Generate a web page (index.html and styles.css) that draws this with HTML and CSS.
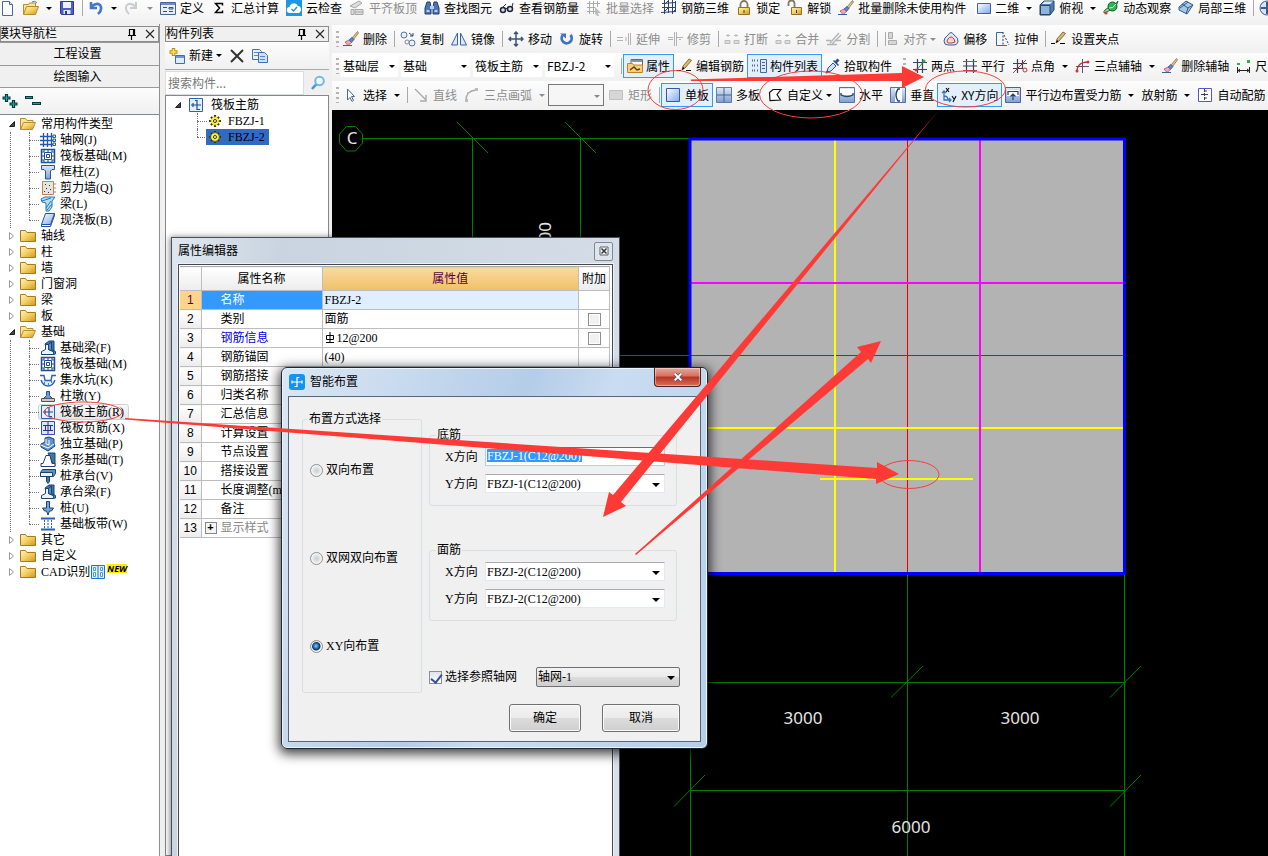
FILE: index.html
```html
<!DOCTYPE html>
<html lang="zh-CN">
<head>
<meta charset="utf-8">
<title>筏板主筋</title>
<link rel="stylesheet" href="styles.css">
</head>
<body>
<svg class="defs" aria-hidden="true">
<defs>
<linearGradient id="gold" x1="0" y1="0" x2="1" y2="1"><stop offset="0" stop-color="#fff3b8"/><stop offset=".5" stop-color="#f3cf62"/><stop offset="1" stop-color="#cf9420"/></linearGradient>
<linearGradient id="blue" x1="0" y1="0" x2="1" y2="1"><stop offset="0" stop-color="#fff"/><stop offset="1" stop-color="#7fa8ee"/></linearGradient>
<linearGradient id="steel" x1="0" y1="0" x2="0" y2="1"><stop offset="0" stop-color="#dfe9f8"/><stop offset="1" stop-color="#7f9fd0"/></linearGradient>
</defs>
<symbol id="i-doc" viewBox="0 0 16 16"><path d="M2.500 1.500h7l3 3v11h-10z" fill="#fff" stroke="#4c6a94"/><path d="M9.500 1.500v3h3" fill="#cfe0f5" stroke="#4c6a94"/></symbol>
<symbol id="i-open" viewBox="0 0 16 16"><path d="M.5 14V4.500h5l1-1.500h6v3" fill="#fbe49a" stroke="#b98c2c"/><path d="M.5 14.500l3-8h12l-3 8z" fill="url(#gold)" stroke="#b98c2c"/><path d="M9 2q3-2 5 1" fill="none" stroke="#4976b8"/></symbol>
<symbol id="i-fopen" viewBox="0 0 16 16"><path d="M.5 13.500v-11h5l1.500 2h6v3" fill="#fbe49a" stroke="#b98c2c"/><path d="M.5 13.500l3-7h12l-3 7z" fill="url(#gold)" stroke="#b98c2c"/></symbol>
<symbol id="i-save" viewBox="0 0 16 16"><path d="M1.500 1.500h13v13h-12l-1-1z" fill="#4f5fc4" stroke="#2e3a8c"/><path d="M4 2h8v6H4z" fill="#eef3ff"/><path d="M4.500 10h7v4h-7z" fill="#dfe5f5"/><path d="M6 11h2v3H6z" fill="#2e3a8c"/></symbol>
<symbol id="i-undo" viewBox="0 0 16 16"><path d="M3 2v6h6M3 7q5-5 9-2 3 4-2 9" fill="none" stroke="#4476cf" stroke-width="2.600"/></symbol>
<symbol id="i-redo" viewBox="0 0 16 16"><path d="M12 2v6H6M12 7Q7 2 3 5q-3 4 2 9" fill="none" stroke="#c9ccd2" stroke-width="2"/></symbol>
<symbol id="i-define" viewBox="0 0 16 16"><path d="M.5 2.500h15v12H.5z" fill="#e8effa" stroke="#4a6493"/><path d="M1 3h14v2H1z" fill="#6b8cc7"/><path d="M3 7.500h4M3 11.500h4M9 7.500h4v1.500H9zM9 11.500h4" fill="none" stroke="#35507f"/></symbol>
<symbol id="i-sigma" viewBox="0 0 16 16"><path d="M11.500 5.500V3.500h-7L8.500 8l-4 4.500h7v-2" fill="none" stroke="#000" stroke-width="1.500"/></symbol>
<symbol id="i-cloud" viewBox="0 0 16 16"><path d="M0 0h16v16H0z" fill="#1e96e6"/><path d="M4 13a3 3 0 0 1-.5-6A4.500 4.500 0 0 1 12 6a3.600 3.600 0 0 1 .5 7z" fill="#fff"/><path d="M5.500 9l2 2 3.500-4" fill="none" stroke="#1e96e6" stroke-width="1.300"/></symbol>
<symbol id="i-aligntop" viewBox="0 0 16 16"><path d="M1 6l9-5 3 2-7 5zM2 9.500h3v5H2zM6 9.500h8v5H6zM6 12h8" fill="#ddd" stroke="#a8a8a8"/></symbol>
<symbol id="i-binoc" viewBox="0 0 16 16"><path d="M3 2h3l1 5v7H1V8zM10 2h3l2 6v6H9V7z" fill="#4c74b4" stroke="#223f70"/><path d="M6 6h4v3H6zM2.500 10h3v2h-3zM10.500 10h3v2h-3z" fill="#b9cdf0"/></symbol>
<symbol id="i-glass" viewBox="0 0 16 16"><circle cx="4" cy="10" r="2.500" fill="#cfe0f4" stroke="#223" stroke-width="1.500"/><path d="M6 9l3-1M2 9l5-5M13 7l1-4" stroke="#334" fill="none"/><circle cx="11" cy="9" r="2.500" fill="#cfe0f4" stroke="#223" stroke-width="1.500"/></symbol>
<symbol id="i-batch" viewBox="0 0 16 16"><path d="M1 3.500h13M1 7.500h8M1 11.500h8M3.500 1v13M7.500 1v13M11.500 1v6" stroke="#ababab" fill="none"/><path d="M9 7l6 6h-3l1 3-2 0-1-2-1 1z" fill="#bbb"/></symbol>
<symbol id="i-rebar3d" viewBox="0 0 16 16"><path d="M3.500 0v14M7.500 0v13M11.500 0v14M14.500 1v11M1 3.500l14-1M1 7.500h14M0 12.500l15-1M3 5l4-4M11 13l4-4M3 12l4-4" stroke="#2c4470" fill="none"/></symbol>
<symbol id="i-lock" viewBox="0 0 16 16"><path d="M4.500 7V4.500a3 3 0 0 1 7 0V7" fill="none" stroke="#857a63" stroke-width="1.800"/><path d="M2.500 7.500h11v7h-11z" fill="url(#gold)" stroke="#97701c"/><path d="M7.500 10h1v3h-1z" fill="#503a10"/></symbol>
<symbol id="i-unlock" viewBox="0 0 16 16"><path d="M1.500 6V3.500a3 3 0 0 1 6 0V7" fill="none" stroke="#857a63" stroke-width="1.800"/><path d="M4.500 7.500h10v7h-10z" fill="url(#gold)" stroke="#97701c"/><path d="M9 10h1v3H9z" fill="#503a10"/></symbol>
<symbol id="i-erase" viewBox="0 0 16 16"><path d="M14.500.5L9 7l1.500 1.500L15.500 2z" fill="#e3c58a" stroke="#7c6230" stroke-width=".7"/><path d="M9 6.500L6 9l2.500 2.500L11 8.500z" fill="#5a86d8" stroke="#27427c" stroke-width=".7"/><path d="M6 9l-4 2 3 3.500 3.500-3z" fill="#f0a8b6" stroke="#8c4c67" stroke-width=".7"/><path d="M0 14.500h9" stroke="#37609e"/></symbol>
<symbol id="i-2d" viewBox="0 0 16 16"><path d="M2.500 3.500h13v10h-13z" fill="url(#blue)" stroke="#3c62b5"/></symbol>
<symbol id="i-cube" viewBox="0 0 16 16"><path d="M1 5l4-4h10v9l-4 5H1z" fill="#4c7db1" stroke="#24466e"/><path d="M1.500 5.500H11v9H1.500z" fill="#8fb4dc" stroke="#24466e"/><path d="M3 4l2.500-2.500H14L11 4z" fill="#d8ebfb"/></symbol>
<symbol id="i-orbit" viewBox="0 0 16 16"><path d="M1 13q-1-3 6-6t8-6q0 4-6 8t-8 4" fill="#8fd6a2" stroke="#167136"/><circle cx="9.500" cy="6.500" r="4.500" fill="#2eb356" stroke="#0c5f27"/><path d="M6 8q4 1 7-4" fill="none" stroke="#d5f4dc"/><circle cx="3" cy="13" r="1.500" fill="#d33"/></symbol>
<symbol id="i-part3d" viewBox="0 0 16 16"><path d="M1 7l7-6 7 4-6 9-8-4z" fill="#a9c7e6" stroke="#2c5a8c"/><path d="M4 4l6 4-2 6M10 8l5-3M2 8l8-6" fill="none" stroke="#2c5a8c"/></symbol>
<symbol id="i-globe" viewBox="0 0 16 16"><circle cx="8" cy="8" r="7" fill="#d6e4f5" stroke="#3c5c8c"/><path d="M2 8h12M8 2v12" stroke="#3c5c8c" stroke-width="2"/></symbol>
<symbol id="i-copy" viewBox="0 0 16 16"><circle cx="4" cy="4" r="3" fill="#e6eef8" stroke="#56759e"/><circle cx="12" cy="12" r="3" fill="#e6eef8" stroke="#56759e"/><circle cx="7" cy="11" r="2" fill="#fff" stroke="#889"/><path d="M9 2l4 3M13 2v3h-3" stroke="#2b4b88" fill="none"/></symbol>
<symbol id="i-mirror" viewBox="0 0 16 16"><path d="M6.500 2v12h-6zM9.500 2v12h6z" fill="#dce8fb" stroke="#3b62a8"/></symbol>
<symbol id="i-move" viewBox="0 0 16 16"><path d="M8 1v14M1 8h14M6 3l2-2 2 2M6 13l2 2 2-2M3 6L1 8l2 2M13 6l2 2-2 2" stroke="#3c5478" stroke-width="1.500" fill="none"/></symbol>
<symbol id="i-rotate" viewBox="0 0 16 16"><path d="M3.500 4.500a5 5 0 1 0 8-.5" stroke="#3d72c8" stroke-width="2.800" fill="none"/><path d="M1 2.500h6v5z" fill="#3d72c8"/></symbol>
<symbol id="i-extend" viewBox="0 0 16 16"><path d="M1 6.500h6M1 9.500h6M9 7h2M9 9h2M12.500 2v12M14.500 2v12" stroke="#b3b3b3"/></symbol>
<symbol id="i-trim" viewBox="0 0 16 16"><path d="M1 6.500h5M1 8.500h5M10 6.500h6M12 8.500h2M7.500 1v14M9.500 1v14" stroke="#b3b3b3"/></symbol>
<symbol id="i-break" viewBox="0 0 16 16"><path d="M2 4.500h4M10 4.500h4M4 3v3M12 3v3M1 9.500h5v3H1zM10 9.500h5v3h-5z" stroke="#bbb" fill="#ddd"/></symbol>
<symbol id="i-split" viewBox="0 0 16 16"><path d="M0 9.500h5M9 9.500h6M1 13.500h10M13 2L4 12M15 4l-9 9" stroke="#b3b3b3" stroke-width="1.300"/></symbol>
<symbol id="i-align" viewBox="0 0 16 16"><path d="M2.500 1v14M5.500 1.500h4v6h-4zM5.500 9.500h8v4h-8z" stroke="#aaa" fill="#d6d6d6"/></symbol>
<symbol id="i-offset" viewBox="0 0 16 16"><path d="M5 4q3-5 6 0 5 3 4 7-1 3-4 3H5q-4 0-4-4 0-3 4-6z" fill="#dce7f7" stroke="#3d5d96"/><path d="M5 8q3-4 6 0l1 3-3 1H5q-2-2 0-4z" fill="#fbd7d4" stroke="#cf3b33"/></symbol>
<symbol id="i-stretch" viewBox="0 0 16 16"><path d="M9 1.500H2.500v13H13" fill="none" stroke="#3b6a9a"/><path d="M9 1v14M10 4l5 10" fill="none" stroke="#223e6a" stroke-dasharray="2 1.500"/></symbol>
<symbol id="i-pencil" viewBox="0 0 16 16"><path d="M0 12.500h4M9 12.500h5" stroke="#000" stroke-width="1.200"/><path d="M5 12l1-4 6-7 2.500 1.500L8 10z" fill="#d5bd6c" stroke="#665022" stroke-width=".8"/><path d="M5 12l1-3 1.500 1.200z" fill="#000"/></symbol>
<symbol id="i-prop" viewBox="0 0 16 16"><path d="M4 1.500h11.500v9H4z" fill="#fff" stroke="#667"/><path d="M4 2h11v2H4z" fill="#8793a8"/><path d="M.5 14.500V5.500h5l1 1.500h9v7.500z" fill="#f7cf7d" stroke="#c58218"/><path d="M3 12l4-3 3 3 3-1" stroke="#5c4320" fill="none" stroke-width="1.500"/></symbol>
<symbol id="i-list" viewBox="0 0 16 16"><path d="M1 2.500h3M1 7.500h3M1 12.500h3M6 2.500h2M6 7.500h2M6 12.500h2" stroke="#46679d" stroke-width="2" stroke-dasharray="1 1"/><path d="M9.500 1.500h6v13h-6z" fill="#dbe8fb" stroke="#46679d"/><path d="M11 4.500h3M11 7.500h3M11 10.500h3" stroke="#46679d"/></symbol>
<symbol id="i-dropper" viewBox="0 0 16 16"><path d="M2 14l1-4 5-5 3 3-5 5z" fill="#cfe2f7" stroke="#2f5791"/><path d="M8 3l5 5 1-1-2-2 2.500-2.500-2-2L10 3 9 2z" fill="#28508c"/><path d="M1 15l2-2" stroke="#28508c" stroke-width="2"/></symbol>
<symbol id="i-hash" viewBox="0 0 16 16"><path d="M5.500 1v14M10.500 1v14M1 4.500h14M1 11.500h14" stroke="#39415f" stroke-width="1.200"/><path d="M4 13l8-10" stroke="#2e8f3e"/><circle cx="12" cy="3" r="1.500" fill="#2fb245"/><circle cx="4" cy="12" r="1.500" fill="#c33"/></symbol>
<symbol id="i-par" viewBox="0 0 16 16"><path d="M4.500 1v14M11.500 1v14" stroke="#39415f" stroke-width="1.200"/><path d="M1 3.500h14M1 12.500h14" stroke="#b9404a"/><path d="M1 8h14" stroke="#39415f"/></symbol>
<symbol id="i-ang" viewBox="0 0 16 16"><path d="M5.500 1v14M1 5.500h14M1 10.500h10M10.500 2v9" stroke="#39415f" stroke-width="1.200"/><path d="M1 15L14 2" stroke="#c33"/><circle cx="13" cy="12" r="2" fill="none" stroke="#c33"/></symbol>
<symbol id="i-3p" viewBox="0 0 16 16"><path d="M2 14q0-10 11-10" fill="none" stroke="#c33" stroke-width="1.300"/><path d="M7.500 1v14M1 8.500h13" stroke="#6b4a70"/><circle cx="13" cy="4" r="1.500" fill="#c33"/><circle cx="2" cy="13" r="1.500" fill="#c33"/></symbol>
<symbol id="i-dim" viewBox="0 0 16 16"><path d="M1.500 9v6M13.500 9v6M2 12.500h11M4 11l-2 1.500L4 14M11 11l2 1.500-2 1.500" fill="none" stroke="#222"/><path d="M1 5h3v2H1zM11 2h3v3h-3z" fill="#38ad4b"/></symbol>
<symbol id="i-pointer" viewBox="0 0 16 16"><path d="M4.500 2v11l2.500-2.500 2 4 1.500-1-2-4h3z" fill="#fff" stroke="#50658d"/></symbol>
<symbol id="i-line" viewBox="0 0 16 16"><path d="M2 2l11 11M13 8v6H7" stroke="#aaa" fill="none" stroke-width="1.400"/></symbol>
<symbol id="i-arc" viewBox="0 0 16 16"><path d="M2 13q0-9 10-10" stroke="#aaa" fill="none" stroke-width="1.300"/><path d="M1 12h3v3H1zM11 1h3v3h-3zM3 5h2v2H3z" fill="#bbb"/></symbol>
<symbol id="i-rect" viewBox="0 0 16 16"><path d="M1.500 3.500h13v9h-13z" fill="#d6d6d6" stroke="#c0c0c0"/></symbol>
<symbol id="i-single" viewBox="0 0 16 16"><path d="M1.500 1.500h13v13h-13z" fill="url(#blue)" stroke="#3459b4"/></symbol>
<symbol id="i-multi" viewBox="0 0 16 16"><path d="M.5.5h15v15H.5z" fill="url(#steel)" stroke="#5b7ba8"/><path d="M8 1v14M1 8h14" stroke="#44648f"/></symbol>
<symbol id="i-poly" viewBox="0 0 16 16"><path d="M3 13.500l-.5-8L6 2.500h8l-4 5 3.500 5.500z" fill="#fff" stroke="#111" stroke-width="1.200"/></symbol>
<symbol id="i-horiz" viewBox="0 0 16 16"><path d="M.5.5h15v15H.5z" fill="url(#steel)" stroke="#5373a5"/><path d="M1 2h14v4q-7 5-14 0z" fill="#fff"/><path d="M2 6v2q6 3 12 0V6" fill="none" stroke="#274472" stroke-width="1.300"/></symbol>
<symbol id="i-vert" viewBox="0 0 16 16"><path d="M.5.5h15v15H.5z" fill="url(#steel)" stroke="#5373a5"/><path d="M5 1h7v14H5z" fill="#fff"/><path d="M10 2H8Q4 8 8 14h2" fill="none" stroke="#274472" stroke-width="1.400"/></symbol>
<symbol id="i-xy" viewBox="0 0 16 16"><path d="M5 1l3 4M8 1L5 5M11 9l2 3M15 9l-3 6" stroke="#111" stroke-width="1.200"/><path d="M3 4v9h7M1 6l2-2 2 2M8 11l2 2-2 2M3 9q4 0 4 4" fill="none" stroke="#3973b8" stroke-width="1.300"/></symbol>
<symbol id="i-edge" viewBox="0 0 16 16"><path d="M.5.5h15v15H.5z" fill="url(#steel)" stroke="#4766a0"/><path d="M2 3h12v6H2z" fill="#fff"/><path d="M3 8V4.500h10V8M8 13V7M5.500 9.500L8 7l2.500 2.500" fill="none" stroke="#20406f" stroke-width="1.200"/></symbol>
<symbol id="i-auto" viewBox="0 0 16 16"><path d="M1.500 1.500h13v13h-13z" fill="#fff" stroke="#5558c9"/><path d="M7.500 2v12M4 7.500h8M7 4h3M7 11h3" fill="none" stroke="#333a80" stroke-dasharray="3 1"/></symbol>
<symbol id="i-folder" viewBox="0 0 16 16"><path d="M.5 13.500v-11h5l1.500 2h8.500v9z" fill="url(#gold)" stroke="#a77a1c"/></symbol>
<symbol id="i-grid" viewBox="0 0 16 16"><path d="M3.500 1v14M7.500 1v14M11.500 1v14M0 4.500h13M0 8.500h13M0 12.500h13" stroke="#2256ae" stroke-width="1.300"/><path d="M13 3h2.500v2.500H13zM13 7h2.500v2.500H13zM13 11h2.500v2.500H13z" fill="#fff" stroke="#2256ae"/></symbol>
<symbol id="i-raft" viewBox="0 0 16 16"><path d="M1.500 1.500h13v13h-13z" fill="#fff" stroke="#1d4e92" stroke-width="1.500"/><path d="M4.500 4.500h7v7h-7z" fill="#fff" stroke="#1d4e92"/><path d="M8 2v2M8 12v2M2 8h2M12 8h2M4 2v2M12 2v2M4 12v2M12 12v2M2 4h2M12 4h2M2 12h2M12 12h2M6.500 6.500h3v3h-3z" fill="none" stroke="#1d4e92"/></symbol>
<symbol id="i-col" viewBox="0 0 16 16"><path d="M1.500 1.500h13v4H12L10.500 7v8h-5V7L4 5.500H1.500z" fill="url(#steel)" stroke="#2555a4"/></symbol>
<symbol id="i-wall" viewBox="0 0 16 16"><path d="M2.500 1.500h11v13h-11z" fill="#e4e4e4" stroke="#cf7e4c"/><path d="M5 4h1v1H5zM9 5h1v1H9zM6 8h1v1H6zM10 9h1v1h-1zM4 11h1v1H4zM8 12h1v1H8z" fill="#333"/><path d="M14 4h2M14 8h2M14 12h2" stroke="#cf7e4c"/></symbol>
<symbol id="i-beam" viewBox="0 0 16 16"><path d="M1 3l4-2h10l-3 4v6l-3 4H6V7L2 6z" fill="#b6dcf8" stroke="#2577bf"/><path d="M2 5l9-3M6 12l5-7M7 14l5-6" stroke="#2577bf"/></symbol>
<symbol id="i-slab" viewBox="0 0 16 16"><path d="M5.500 1.500h9l-4 11h-9z" fill="url(#blue)" stroke="#214fa3"/><path d="M1.500 12.500v2h9l4-11v-2" fill="none" stroke="#214fa3"/></symbol>
<symbol id="i-fbeam" viewBox="0 0 16 16"><path d="M5 4l4-3h5v13H9z" fill="#3f74ad" stroke="#1b4270"/><path d="M1.500 14.500v-3l4-2v-5h3v5l5 2v3z" fill="#e9f2fc" stroke="#1b4270"/><path d="M8.500 4.500l3-2.500v7.500l4 2v2.500l-2 .5v-3l-5-2z" fill="#5a90c8" stroke="#1b4270"/></symbol>
<symbol id="i-pit" viewBox="0 0 16 16"><path d="M1 8q2 6 7 6t7-6l-4 .5H5z" fill="#dce9fa"/><path d="M0 3.500h4l1 5h6l1-5h4M1 8q2 6 7 6t7-6M4 11h1M8 12h1M11 10h1" fill="none" stroke="#2b62b0" stroke-width="1.400"/></symbol>
<symbol id="i-pier" viewBox="0 0 16 16"><path d="M6.500 3.500h3v4l3 3h-9l3-3z" fill="#6f9cd6" stroke="#29518b"/><path d="M1.500 10.500h13v3h-13z" fill="#c9c9c9" stroke="#555"/></symbol>
<symbol id="i-main" viewBox="0 0 16 16"><path d="M1.500 1.500h13v13h-13z" fill="#e4edfc" stroke="#2b62b8"/><path d="M3 8h10M9 3v10M9 12.500h3M5 6v4M9 3.500H7" fill="none" stroke="#1b4f97" stroke-width="1.200"/></symbol>
<symbol id="i-neg" viewBox="0 0 16 16"><path d="M1.500 1.500h13v13h-13z" fill="#dce5fb" stroke="#3a50b0"/><path d="M8 2v12M3 5.500h10M3 10.500h10M5.500 6v4M10.500 6v4" stroke="#23357f"/></symbol>
<symbol id="i-iso" viewBox="0 0 16 16"><path d="M1 8l4-2V2l4-1 5 2v5l1 2-7 5-7-4z" fill="#5f94cc" stroke="#1b4270"/><path d="M1 9l7 3 6-4M6 3v5l3 1V4" fill="none" stroke="#fff"/></symbol>
<symbol id="i-strip" viewBox="0 0 16 16"><path d="M8 1h7v13l-2-2-3-7z" fill="#3f74ad" stroke="#1b4270"/><path d="M1 14.500v-3h2l3-8h4l2 8h3v3z" fill="#fff" stroke="#1b4270"/></symbol>
<symbol id="i-cap" viewBox="0 0 16 16"><path d="M.5 4.500l2-3h13v4l-2 3H.5z" fill="#5a90c8" stroke="#1b4270"/><path d="M.5 4.500h12v4H.5z" fill="#e9f2fc" stroke="#1b4270"/><path d="M6.500 8.500h3v5l-1.500 2-1.500-2z" fill="#3f74ad" stroke="#1b4270"/></symbol>
<symbol id="i-pile" viewBox="0 0 16 16"><path d="M6.500 1.500h3V8h4l-2 3h-2l-1.500 4L6.500 11h-2l-2-3h4z" fill="#78a6d8" stroke="#1b4270"/></symbol>
<symbol id="i-band" viewBox="0 0 16 16"><path d="M1 2.500h14M1 13.500h14" stroke="#2461b5" stroke-width="2"/><path d="M4.500 4v9M8 4v9M11.500 4v9" stroke="#2461b5" stroke-dasharray="2 1"/></symbol>
<symbol id="i-cad" viewBox="0 0 16 16"><path d="M1.500 1.500h13v13h-13zM8 1v14" fill="#e1f0ff" stroke="#1c74c9"/><path d="M3.500 3.500h2v3h-2zM10.500 3.500h2v3h-2zM3.500 8.500h2v4h-2zM10.500 8.500h2v4h-2z" fill="#fff" stroke="#4e97dd"/></symbol>
<symbol id="i-gear" viewBox="0 0 16 16"><path d="M8 2v12M2 8h12M4 4l8 8M12 4l-8 8" stroke="#3a3400" stroke-width="2.200"/><circle cx="8" cy="8" r="3.800" fill="#ffee20"/><path d="M8 3.500v9M3.500 8h9M5 5l6 6M11 5l-6 6" stroke="#ffee20" stroke-width="1.200"/><circle cx="8" cy="8" r="1.500" fill="#fff" stroke="#333"/></symbol>
<symbol id="i-new" viewBox="0 0 16 16"><path d="M6.500 7.500h9v8h-9z" fill="#dcebff" stroke="#3e6cb0"/><path d="M7 8h8v2H7z" fill="#6c96d8"/><path d="M4.500 0v8M.5 4h8" stroke="#b98d14" stroke-width="3.400"/><path d="M4.500 1v6M1.500 4h6" stroke="#ffe45b" stroke-width="1.600"/></symbol>
<symbol id="i-x" viewBox="0 0 16 16"><path d="M2 2l12 12M14 2L2 14" stroke="#333" stroke-width="2"/></symbol>
<symbol id="i-pages" viewBox="0 0 16 16"><path d="M.5 1.500h7l2 2v8h-9z" fill="#e7f0ff" stroke="#3e6fc0"/><path d="M6.500 4.500h6l3 3v7h-9z" fill="#cfe0fb" stroke="#3e6fc0"/><path d="M2 4.500h4M2 7.500h4M8 8.500h5M8 11.500h5" stroke="#5a86cf"/></symbol>
<symbol id="i-search" viewBox="0 0 16 16"><circle cx="9.500" cy="6" r="4.300" fill="#eef8ff" stroke="#74b7e8" stroke-width="2"/><path d="M6 9.500L2 14" stroke="#4a94cf" stroke-width="2.600"/></symbol>
<symbol id="i-pin" viewBox="0 0 16 16"><path d="M5.500 9V3.500h5V9M9.500 4v5M4 9.500h8M7.500 10v4" fill="none" stroke="#000" stroke-width="1.200"/></symbol>
<symbol id="i-close" viewBox="0 0 16 16"><path d="M4 4l8 8M12 4l-8 8" stroke="#222" stroke-width="1.100"/></symbol>
<symbol id="i-minix" viewBox="0 0 16 16"><path d="M4 4h8v8H4z" fill="#fff" stroke="#56606c"/><path d="M5.500 5.500l5 5M10.500 5.500l-5 5" stroke="#333" stroke-width="1.500"/></symbol>
<symbol id="i-plus" viewBox="0 0 16 16"><path d="M4.500 1v8M.5 5h8M11.500 7v8M7.500 11h8" stroke="#013c3a" stroke-width="3.200"/><path d="M4.500 2v6M1.500 5h6M11.500 8v6M8.500 11h6" stroke="#16a39b"/></symbol>
<symbol id="i-minus" viewBox="0 0 16 16"><path d="M0 4.500h8M7 10.500h9" stroke="#013c3a" stroke-width="3"/><path d="M1 4.500h6M8 10.500h7" stroke="#16a39b"/></symbol>
<symbol id="i-opened" viewBox="0 0 8 8"><path d="M6.500 1.500v5h-5z" fill="#444" stroke="#222"/></symbol>
<symbol id="i-closed" viewBox="0 0 8 8"><path d="M1.500.5v7l4-3.500z" fill="#fff" stroke="#999"/></symbol>
</svg>

<div class="app">
<header class="bar bar-top">
<button class="tb" aria-label="新建工程"><svg><use href="#i-doc"/></svg></button>
<button class="tb" aria-label="打开"><svg><use href="#i-open"/></svg><i class="dd"></i></button>
<button class="tb" aria-label="保存"><svg><use href="#i-save"/></svg></button>
<i class="sep"></i>
<button class="tb" aria-label="撤销"><svg><use href="#i-undo"/></svg><i class="dd"></i></button>
<button class="tb off" aria-label="恢复"><svg><use href="#i-redo"/></svg><i class="dd"></i></button>
<button class="tb"><svg><use href="#i-define"/></svg>定义</button>
<button class="tb"><svg><use href="#i-sigma"/></svg>汇总计算</button>
<button class="tb"><svg><use href="#i-cloud"/></svg>云检查</button>
<button class="tb off"><svg><use href="#i-aligntop"/></svg>平齐板顶</button>
<button class="tb"><svg><use href="#i-binoc"/></svg>查找图元</button>
<button class="tb"><svg><use href="#i-glass"/></svg>查看钢筋量</button>
<button class="tb off"><svg><use href="#i-batch"/></svg>批量选择</button>
<button class="tb"><svg><use href="#i-rebar3d"/></svg>钢筋三维</button>
<button class="tb"><svg><use href="#i-lock"/></svg>锁定</button>
<button class="tb"><svg><use href="#i-unlock"/></svg>解锁</button>
<button class="tb"><svg><use href="#i-erase"/></svg>批量删除未使用构件</button>
<button class="tb view"><svg><use href="#i-2d"/></svg>二维<i class="dd"></i></button>
<button class="tb"><svg><use href="#i-cube"/></svg>俯视<i class="dd"></i></button>
<button class="tb"><svg><use href="#i-orbit"/></svg>动态观察</button>
<button class="tb"><svg><use href="#i-part3d"/></svg>局部三维</button>
<i class="sep"></i>
<button class="tb" aria-label="全屏"><svg><use href="#i-globe"/></svg></button>
</header>

<div class="body">
<aside class="nav">
<div class="panel-head nav-head"><span class="cut">模块导航栏</span><svg><use href="#i-pin"/></svg><svg><use href="#i-close"/></svg></div>
<button class="nav-btn">工程设置</button>
<button class="nav-btn">绘图输入</button>
<div class="nav-tools"><button class="tb" aria-label="全部展开"><svg><use href="#i-plus"/></svg></button><button class="tb" aria-label="全部折叠"><svg><use href="#i-minus"/></svg></button></div>
<ul class="tree nav-tree">
<li><div class="row"><svg class="tog"><use href="#i-opened"/></svg><svg><use href="#i-fopen"/></svg>常用构件类型</div>
<ul class="sub">
<li><svg><use href="#i-grid"/></svg>轴网(J)</li>
<li><svg><use href="#i-raft"/></svg>筏板基础(M)</li>
<li><svg><use href="#i-col"/></svg>框柱(Z)</li>
<li><svg><use href="#i-wall"/></svg>剪力墙(Q)</li>
<li><svg><use href="#i-beam"/></svg>梁(L)</li>
<li><svg><use href="#i-slab"/></svg>现浇板(B)</li>
</ul></li>
<li><div class="row"><svg class="tog"><use href="#i-closed"/></svg><svg><use href="#i-folder"/></svg>轴线</div></li>
<li><div class="row"><svg class="tog"><use href="#i-closed"/></svg><svg><use href="#i-folder"/></svg>柱</div></li>
<li><div class="row"><svg class="tog"><use href="#i-closed"/></svg><svg><use href="#i-folder"/></svg>墙</div></li>
<li><div class="row"><svg class="tog"><use href="#i-closed"/></svg><svg><use href="#i-folder"/></svg>门窗洞</div></li>
<li><div class="row"><svg class="tog"><use href="#i-closed"/></svg><svg><use href="#i-folder"/></svg>梁</div></li>
<li><div class="row"><svg class="tog"><use href="#i-closed"/></svg><svg><use href="#i-folder"/></svg>板</div></li>
<li><div class="row"><svg class="tog"><use href="#i-opened"/></svg><svg><use href="#i-fopen"/></svg>基础</div>
<ul class="sub">
<li><svg><use href="#i-fbeam"/></svg>基础梁(F)</li>
<li><svg><use href="#i-raft"/></svg>筏板基础(M)</li>
<li><svg><use href="#i-pit"/></svg>集水坑(K)</li>
<li><svg><use href="#i-pier"/></svg>柱墩(Y)</li>
<li><span class="current"><svg><use href="#i-main"/></svg>筏板主筋(R)</span></li>
<li><svg><use href="#i-neg"/></svg>筏板负筋(X)</li>
<li><svg><use href="#i-iso"/></svg>独立基础(P)</li>
<li><svg><use href="#i-strip"/></svg>条形基础(T)</li>
<li><svg><use href="#i-cap"/></svg>桩承台(V)</li>
<li><svg><use href="#i-fbeam"/></svg>承台梁(F)</li>
<li><svg><use href="#i-pile"/></svg>桩(U)</li>
<li><svg><use href="#i-band"/></svg>基础板带(W)</li>
</ul></li>
<li><div class="row"><svg class="tog"><use href="#i-closed"/></svg><svg><use href="#i-folder"/></svg>其它</div></li>
<li><div class="row"><svg class="tog"><use href="#i-closed"/></svg><svg><use href="#i-folder"/></svg>自定义</div></li>
<li><div class="row"><svg class="tog"><use href="#i-closed"/></svg><svg><use href="#i-folder"/></svg>CAD识别<svg class="cad"><use href="#i-cad"/></svg><b class="new">NEW</b></div></li>
</ul>
</aside>

<aside class="parts">
<div class="panel-head"><span>构件列表</span><svg><use href="#i-pin"/></svg><svg><use href="#i-close"/></svg></div>
<div class="parts-tools">
<button class="tb"><svg><use href="#i-new"/></svg>新建<i class="dd tight"></i></button>
<button class="tb" aria-label="删除构件"><svg><use href="#i-x"/></svg></button>
<button class="tb" aria-label="复制构件"><svg><use href="#i-pages"/></svg></button>
</div>
<div class="search"><input type="text" placeholder="搜索构件..." aria-label="搜索构件"><button class="tb" aria-label="搜索"><svg><use href="#i-search"/></svg></button></div>
<ul class="tree parts-tree">
<li><div class="row"><svg class="tog"><use href="#i-opened"/></svg><svg><use href="#i-main"/></svg>筏板主筋</div>
<ul class="sub">
<li><span class="part"><svg><use href="#i-gear"/></svg>FBZJ-1</span></li>
<li><span class="part picked"><svg><use href="#i-gear"/></svg>FBZJ-2</span></li>
</ul></li>
</ul>
</aside>

<main class="work">
<div class="bars">
<div class="bar">
<i class="grip"></i>
<button class="tb"><svg><use href="#i-erase"/></svg>删除</button><i class="sep"></i>
<button class="tb"><svg><use href="#i-copy"/></svg>复制</button>
<button class="tb"><svg><use href="#i-mirror"/></svg>镜像</button><i class="sep"></i>
<button class="tb"><svg><use href="#i-move"/></svg>移动</button>
<button class="tb"><svg><use href="#i-rotate"/></svg>旋转</button><i class="sep"></i>
<button class="tb off"><svg><use href="#i-extend"/></svg>延伸</button>
<button class="tb off"><svg><use href="#i-trim"/></svg>修剪</button><i class="sep"></i>
<button class="tb off"><svg><use href="#i-break"/></svg>打断</button>
<button class="tb off"><svg><use href="#i-break"/></svg>合并</button>
<button class="tb off"><svg><use href="#i-split"/></svg>分割</button><i class="sep"></i>
<button class="tb off"><svg><use href="#i-align"/></svg>对齐<i class="dd tight"></i></button>
<button class="tb"><svg><use href="#i-offset"/></svg>偏移</button>
<button class="tb"><svg><use href="#i-stretch"/></svg>拉伸</button><i class="sep"></i>
<button class="tb"><svg><use href="#i-pencil"/></svg>设置夹点</button>
</div>
<div class="bar snug">
<i class="grip"></i>
<div class="combos">
<label class="combo short"><select aria-label="楼层"><option>基础层</option></select></label>
<label class="combo"><select aria-label="构件大类"><option>基础</option></select></label>
<label class="combo"><select aria-label="构件类型"><option>筏板主筋</option></select></label>
<label class="combo"><select aria-label="构件"><option>FBZJ-2</option></select></label>
</div>
<i class="sep"></i>
<button class="tb on"><svg><use href="#i-prop"/></svg>属性</button>
<button class="tb"><svg><use href="#i-pencil"/></svg>编辑钢筋</button>
<button class="tb on"><svg><use href="#i-list"/></svg>构件列表</button>
<button class="tb"><svg><use href="#i-dropper"/></svg>拾取构件</button>
<i class="grip"></i>
<button class="tb"><svg><use href="#i-hash"/></svg>两点</button>
<button class="tb"><svg><use href="#i-par"/></svg>平行</button>
<button class="tb"><svg><use href="#i-ang"/></svg>点角<i class="dd wide"></i></button>
<button class="tb"><svg><use href="#i-3p"/></svg>三点辅轴<i class="dd wide"></i></button>
<button class="tb"><svg><use href="#i-erase"/></svg>删除辅轴</button>
<button class="tb"><svg><use href="#i-dim"/></svg>尺</button>
</div>
<div class="bar">
<i class="grip"></i>
<button class="tb"><svg><use href="#i-pointer"/></svg>选择<i class="dd"></i></button><i class="sep"></i>
<button class="tb off"><svg><use href="#i-line"/></svg>直线</button>
<button class="tb off"><svg><use href="#i-arc"/></svg>三点画弧<i class="dd"></i></button>
<label class="combo boxed off"><select aria-label="弧选项"><option></option></select></label>
<button class="tb off"><svg><use href="#i-rect"/></svg>矩形</button><i class="sep"></i>
<button class="tb on"><svg><use href="#i-single"/></svg>单板</button>
<button class="tb"><svg><use href="#i-multi"/></svg>多板</button>
<button class="tb"><svg><use href="#i-poly"/></svg>自定义<i class="dd tight"></i></button>
<button class="tb"><svg><use href="#i-horiz"/></svg>水平</button>
<button class="tb"><svg><use href="#i-vert"/></svg>垂直</button>
<button class="tb on"><svg><use href="#i-xy"/></svg>XY方向</button>
<button class="tb"><svg><use href="#i-edge"/></svg>平行边布置受力筋<i class="dd"></i></button>
<button class="tb">放射筋<i class="dd"></i></button>
<button class="tb"><svg><use href="#i-auto"/></svg>自动配筋</button>
</div>
</div>
<div class="canvas">
<svg class="drawing" viewBox="332 110 936 746" preserveAspectRatio="xMinYMin slice">
<g fill="none" stroke="#008000">
<path d="M346.500 126.500h9l7 7.500v9l-7 8h-9l-7-8v-9z"/>
<path d="M363 138.500h327M472.500 138v120M580.500 138v120M457 122l31 31M565 122l31 31M600 355.500h90M690.500 574v282M907.500 574v282M1124.500 574v282M690 682.500h434M690 790.500h434"/>
<path d="M891 697.500l32-31.500M1110 697.500l31-31.500M1110 806.500l31-31.500M674 806.500l31-31.500"/>
</g>
<path d="M690 139h434.500v434.500H690z" fill="#b3b3b3"/>
<path d="M691 355.500h432M907.500 140v432" stroke="#e60000"/>
<path d="M835 140v432M691 428h432M820 479h153" stroke="#ff0" stroke-width="2"/>
<path d="M980 140v432M691 283h432" stroke="#f0f" stroke-width="2"/>
<path d="M690 139h434.500v434.500H690z" fill="none" stroke="#00f" stroke-width="3"/>
<g class="dims"><text x="352" y="144">C</text><text x="803" y="724">3000</text><text x="1020" y="724">3000</text><text x="911" y="833">6000</text><text transform="translate(551 261) rotate(-90)">3000</text></g>
</svg>
</div>
</main>
</div>
</div>

<section class="win props" aria-label="属性编辑器">
<div class="props-title"><span>属性编辑器</span><button class="mini" aria-label="关闭"><svg><use href="#i-minix"/></svg></button></div>
<div class="props-body">
<table>
<colgroup><col class="c-num"><col class="c-name"><col><col class="c-add"></colgroup>
<thead><tr><th></th><th>属性名称</th><th class="hot">属性值</th><th>附加</th></tr></thead>
<tbody>
<tr class="cur"><th>1</th><td>名称</td><td>FBZJ-2</td><td></td></tr>
<tr><th>2</th><td>类别</td><td>面筋</td><td><input type="checkbox" aria-label="附加类别"></td></tr>
<tr><th>3</th><td class="link">钢筋信息</td><td><svg class="phi" viewBox="0 0 10 12"><path d="M5 0v11M1 10.500h8M1.500 3.500h7v4h-7z" fill="none" stroke="#000"/></svg>12@200</td><td><input type="checkbox" aria-label="附加钢筋信息"></td></tr>
<tr><th>4</th><td>钢筋锚固</td><td>(40)</td><td></td></tr>
<tr><th>5</th><td>钢筋搭接</td><td></td><td></td></tr>
<tr><th>6</th><td>归类名称</td><td></td><td></td></tr>
<tr><th>7</th><td>汇总信息</td><td></td><td></td></tr>
<tr><th>8</th><td>计算设置</td><td></td><td></td></tr>
<tr><th>9</th><td>节点设置</td><td></td><td></td></tr>
<tr><th>10</th><td>搭接设置</td><td></td><td></td></tr>
<tr><th>11</th><td>长度调整(mm)</td><td></td><td></td></tr>
<tr><th>12</th><td>备注</td><td></td><td></td></tr>
<tr><th>13</th><td class="group"><button class="expand" aria-label="展开">+</button>显示样式</td><td></td><td></td></tr>
</tbody>
</table>
</div>
</section>

<section class="win dialog" role="dialog" aria-label="智能布置">
<div class="dialog-title"><svg class="logo" viewBox="0 0 16 16"><rect width="16" height="16" rx="3" fill="#1494ee"/><path d="M3 8h10M8 3v10M3 6.500v3M13 6.500v3M7.500 3.500h3M8 12.500H5.500" fill="none" stroke="#fff" stroke-width="1.200"/></svg><span>智能布置</span><button class="close" aria-label="关闭"><svg viewBox="0 0 14 12"><path d="M3 2l8 8M11 2l-8 8" stroke="#555c70" stroke-width="4.200"/><path d="M3 2l8 8M11 2l-8 8" stroke="#fff" stroke-width="2.400"/></svg></button></div>
<form class="client">
<fieldset class="ways"><legend>布置方式选择</legend>
<label><input type="radio" name="way">双向布置</label>
<label><input type="radio" name="way">双网双向布置</label>
<label><input type="radio" name="way" checked>XY向布置</label>
</fieldset>
<div class="right">
<fieldset class="bars-set"><legend>底筋</legend>
<label><span>X方向</span><span class="pick focus"><input type="text" value="FBZJ-1(C12@200)" size="15" readonly></span></label>
<label><span>Y方向</span><span class="pick arrow"><select><option>FBZJ-1(C12@200)</option></select></span></label>
</fieldset>
<fieldset class="bars-set"><legend>面筋</legend>
<label><span>X方向</span><span class="pick arrow"><select><option>FBZJ-2(C12@200)</option></select></span></label>
<label><span>Y方向</span><span class="pick arrow"><select><option>FBZJ-2(C12@200)</option></select></span></label>
</fieldset>
<div class="axis"><label><input type="checkbox" checked>选择参照轴网</label><span class="pick arrow flat"><select aria-label="轴网"><option>轴网-1</option></select></span></div>
<div class="actions"><button type="button" class="ok">确定</button><button type="button" class="cancel">取消</button></div>
</div>
</form>
</section>

<svg class="marks" viewBox="0 0 1268 856" aria-hidden="true">
<g fill="none" stroke="#f5403b"><ellipse cx="675.500" cy="90" rx="27.500" ry="19.500"/><ellipse cx="811" cy="94.500" rx="51.500" ry="23.500"/><ellipse cx="965.500" cy="89" rx="40" ry="18"/><ellipse cx="909" cy="474.500" rx="30" ry="14"/><ellipse cx="83" cy="412" rx="39" ry="10"/></g>
<g fill="#fd3a36">
<path d="M691 79.500v1.500l211 0v7l22-11-22-11v7z"/>
<path d="M938 111L613 495l-4-3-6 25 23-11-5-4z"/>
<path d="M635 554l1 1 232-196 3 4 10-22-24 6 4 5z"/>
<path d="M125 418v1.500l751 59.500v5l23-10-22-12v6z"/>
</g>
</svg>
</body>
</html>
```

FILE: styles.css
```css
* { box-sizing: border-box; }
body { margin: 0; height: 100vh; overflow: hidden; position: relative; background: #f0f0f0; color: #000; font: 12px/16px "Noto Sans", "Noto Sans CJK SC", sans-serif; }
button, input, select { font: inherit; color: inherit; margin: 0; padding: 0; }
ul { list-style: none; margin: 0; padding: 0; }
.defs { position: absolute; width: 0; height: 0; }
.app { height: 100%; display: flex; flex-direction: column; }
.body { flex: 1; min-height: 0; display: flex; }

/* toolbars */
.bar { display: flex; align-items: center; gap: 7px; height: 28px; padding-left: 4px; overflow: hidden; white-space: nowrap; background: linear-gradient(#fdfdfd, #f0f0f0); font-family: "Noto Sans CJK SC", sans-serif; }
.bar-top { height: 24px; flex: none; padding: 0 0 8px; }
.tb { display: flex; align-items: center; gap: 4px; flex: none; border: 0; background: none; white-space: nowrap; }
.tb svg { width: 16px; height: 16px; flex: none; }
.snug { padding-bottom: 2px; }
.snug .tb { gap: 3px; }
.tb.off { color: #8d8d8d; }
.tb.on { height: 24px; margin: 0 -4px; padding: 0 3px; border: 1px solid #3399ff; background: #e3effc; }
.tb.view { margin-left: 2px; background: #fff; }
.dd { flex: none; width: 6px; height: 3px; margin-left: 3px; border: 3px solid transparent; border-top-color: currentColor; border-bottom: 0; }
.dd.tight { margin-left: -1px; }
.dd.wide { margin-left: 4px; }
.sep { flex: none; width: 1px; height: 16px; margin-right: -2px; background: #a9a9a9; }
.grip { flex: none; width: 3px; height: 16px; margin-right: -3px; background: repeating-linear-gradient(#b4b4b4 0 2px, transparent 2px 5px); }
.tb + .grip { margin-left: 4px; margin-right: -1px; }
.combos { display: flex; gap: 3px; margin-left: -2px; }
.combo { position: relative; display: flex; width: 69px; height: 22px; background: #fff; }
.combo.short { width: 57px; }
.combo select { appearance: none; width: 100%; border: 0; background: none; padding-left: 2px; }
.combo::after { content: ""; position: absolute; right: 3px; top: 10px; border: 3px solid transparent; border-top-color: #000; border-bottom: 0; pointer-events: none; }
.combo.boxed { width: 56px; flex: none; margin: 0 -3px 0 -4px; border: 1px solid #777; background: #f6f6f6; }
.combo.off::after { border-top-color: #888; }

/* navigation */
.nav { width: 160px; flex: none; display: flex; flex-direction: column; padding-top: 2px; border-right: 1px solid #8c8f94; }
.panel-head { display: flex; align-items: center; height: 16px; flex: none; border: 1px solid #8c8c8c; overflow: hidden; }
.panel-head span { flex: 1; white-space: nowrap; }
.panel-head svg { width: 16px; height: 16px; margin-left: 2px; }
.cut { text-indent: -4px; }
.nav-btn { height: 22px; flex: none; border: 0; border-bottom: 1px solid #999; background: #f0f0f0; padding-right: 4px; }
.nav-head + .nav-btn { border-top: 1px solid #999; height: 24px; }
.nav-tools { display: flex; gap: 7px; height: 26px; padding-left: 2px; background: linear-gradient(#fdfdfd, #f0f0f0); }
.tree { font-family: "Liberation Serif", "Noto Sans CJK SC", serif; background: #fff; border-top: 1px solid #828790; overflow: hidden; flex: 1; }
.tree svg { width: 16px; height: 16px; flex: none; }
.tree .tog { width: 8px; height: 8px; }
.row { display: flex; align-items: center; gap: 5px; height: 16px; padding-left: 8px; white-space: nowrap; }
.row .tog { margin-right: -1px; }
.row .cad { margin-left: -5px; }
.nav-tree { padding-top: 1px; }
.sub { position: relative; margin-left: 29px; }
.sub::before { content: ""; position: absolute; left: -19px; top: 0; bottom: 0; border-left: 1px dotted #777; }
.sub li { position: relative; display: flex; align-items: center; gap: 4px; height: 16px; padding-left: 11px; white-space: nowrap; }
.sub li::before { content: ""; position: absolute; left: 0; top: 8px; width: 10px; border-top: 1px dotted #777; }
.sub li::after { content: ""; position: absolute; left: 0; top: 0; height: 16px; border-left: 1px dotted #777; }
.sub li:last-child::after { height: 8px; }
.current { display: flex; align-items: center; gap: 4px; height: 16px; margin-left: -2px; padding: 0 4px 0 1px; border: 1px solid #d2d2d2; border-radius: 3px; background: linear-gradient(#fafafa, #e5e5e5); }
.new { align-self: flex-start; margin-left: -4px; background: #ffed00; font: bold italic 9px/9px "Open Sans", sans-serif; }

/* component list */
.parts { width: 164px; margin: 0 3px 0 5px; flex: none; display: flex; flex-direction: column; padding-top: 2px; }
.parts-tools { display: flex; align-items: center; gap: 7px; height: 27px; padding: 0 4px; background: linear-gradient(#fdfdfd, #f0f0f0); }
.search { display: flex; align-items: center; gap: 6px; height: 26px; border-top: 1px solid #aaa; }
.search input { width: 139px; height: 24px; border: 1px solid #dcdcdc; padding-left: 2px; background: #fff; font-family: "Noto Sans CJK SC", sans-serif; }
.search input::placeholder { color: #777; }
.parts-tree { border: 1px solid #828790; padding-top: 1px; }
.parts-tree .row { gap: 7px; }
.parts-tree .sub { margin-left: 31px; }
.parts-tree .sub::before { display: none; }
.part { display: flex; align-items: center; gap: 5px; height: 16px; padding: 0 4px 0 1px; margin-left: -2px; }
.picked { background: #316ac5; }

/* drawing area */
.work { flex: 1; min-width: 0; display: flex; flex-direction: column; }
.bars { padding: 1px 0; }
.canvas { flex: 1; min-height: 0; background: #000; }
.drawing { display: block; width: 100%; height: 100%; }
.dims { fill: #e4e4e4; font: 17px "Noto Sans", sans-serif; text-anchor: middle; }
.dims text:last-child { text-anchor: start; }

/* floating windows */
.win { position: absolute; display: flex; flex-direction: column; }
.win, .win table { font-family: "Liberation Serif", "Noto Sans CJK SC", serif; }
.props { left: 171px; top: 237px; width: 449px; bottom: -8px; padding: 0 6px; border: 1px solid #4b5058; background: linear-gradient(100deg, #dfe6ee, #c9d4e0 20%, #d8e0e9); box-shadow: -1px 0 6px rgba(0, 0, 0, .5); }
.props-title { display: flex; align-items: center; justify-content: space-between; height: 26px; }
.mini { width: 19px; height: 19px; border: 1px solid #7f8893; border-radius: 2px; background: #dfe5ec; display: flex; align-items: center; justify-content: center; }
.mini svg { width: 16px; height: 16px; }
.props-body { flex: 1; background: #fff; border: 1px solid #444a52; padding: 1px; outline: 1px solid #eef2f6; }
.props table { width: 430px; border-collapse: collapse; table-layout: fixed; border-top: 1px solid #aaa; }
.c-num { width: 21px; }
.c-name { width: 121px; }
.c-add { width: 31px; }
.props th, .props td { height: 19px; padding: 0; border: 1px solid #bdbdbd; border-top: 0; border-left: 0; font-weight: normal; line-height: 18px; white-space: nowrap; overflow: hidden; }
.props th { background: linear-gradient(#fff, #ececec); text-align: center; font-family: "Liberation Sans", "Noto Sans CJK SC", sans-serif; }
.props thead th { height: 24px; }
.props th.hot { background: linear-gradient(#fadaa0, #f0c068); color: #600040; }
.props tbody td:nth-child(2) { padding-left: 19px; }
.props tbody td:nth-child(3) { padding-left: 2px; }
.props td:last-child { text-align: center; }
.props td input { appearance: none; width: 13px; height: 13px; border: 1px solid #8e8f8f; background: #f1f1f1; box-shadow: inset 0 0 0 1px #fff; vertical-align: middle; margin-bottom: 2px; }
.props .cur th { background: #fdd48a; color: #600040; }
.props .cur td:nth-child(2) { background: #3399ff; color: #fff; }
.props .cur td:nth-child(3) { background: #e0efff; }
.link { color: #0000e8; }
.props tbody td.group { padding-left: 3px; color: #888; }
.expand { width: 12px; height: 12px; margin-right: 4px; border: 1px solid #888; background: #f4f4f4; color: #000; font: bold 11px/9px "Liberation Sans", sans-serif; vertical-align: 1px; }
.phi { width: 10px; height: 12px; margin-right: 2px; vertical-align: -2px; }

.dialog { left: 281px; top: 367px; width: 427px; padding: 0 6px 6px; border: 1px solid #20262e; border-radius: 6px; background: linear-gradient(110deg, #dbe7f3, #b4cde8 45%, #cadcf0 60%, #b3d0ea); box-shadow: inset 0 0 0 1px #eaf4fd, 0 3px 12px 2px rgba(0, 0, 0, .75); }
.dialog-title { display: flex; align-items: center; gap: 5px; height: 28px; padding-left: 1px; }
.logo { width: 16px; height: 16px; }
.dialog-title span { flex: 1; }
.close { align-self: flex-start; width: 47px; height: 19px; border: 1px solid #4b1f1c; border-top: 0; border-radius: 0 0 4px 4px; background: linear-gradient(#e4a79a, #d4705f 45%, #b83222 50%, #d4715c); box-shadow: inset 0 0 0 1px rgba(255, 255, 255, .4); display: flex; align-items: center; justify-content: center; }
.close svg { width: 12px; height: 10px; }
.client { display: flex; gap: 7px; padding: 14px 20px 9px 13px; border: 1px solid #56677c; background: #f0f0f0; }
fieldset { margin: 0; min-width: 0; border: 1px solid #d5dfe5; border-radius: 3px; }
legend { padding: 0 1px; line-height: 16px; height: 16px; }
.ways { width: 120px; flex: none; display: flex; flex-direction: column; gap: 72px; padding: 35px 0 0 7px; height: 282px; }
.ways legend { margin-left: -2px; }
.ways label { display: flex; align-items: center; gap: 3px; height: 16px; white-space: nowrap; }
.ways input { appearance: none; width: 13px; height: 13px; border: 1px solid #8e8f8f; border-radius: 50%; background: radial-gradient(#c9cdd2, #eee 60%); box-shadow: inset 0 0 0 1px #f6f6f6; }
.ways input:checked { background: radial-gradient(circle at 5px 5px, #7fd3f7 0, #145a96 3px, #0c2f57 4px, #e8e8e8 5px); }
.right { flex: 1; min-width: 0; padding-top: 16px; }
.bars-set { width: 248px; display: flex; flex-direction: column; gap: 8px; padding: 4px 11px 12px 15px; }
.bars-set legend { margin-left: -9px; }
.bars-set + .bars-set { margin-top: 36px; }
.bars-set label { display: flex; align-items: center; justify-content: space-between; }
.pick { position: relative; display: flex; width: 180px; height: 20px; border: 1px solid #e3e9ef; border-top-color: #abadb3; background: #fff; }
.bars-set .pick { height: 19px; }
.pick select, .pick input { appearance: none; border: 0; background: none; outline: 0; }
.pick select { width: 100%; padding-left: 1px; }
.pick.arrow::after { content: ""; position: absolute; right: 4px; top: 8px; border: 4px solid transparent; border-top-color: #000; border-bottom: 0; pointer-events: none; }
.pick.focus { border-color: #b5cfe7; border-top-color: #3d7bad; }
.pick.focus input { width: 95px; height: 13px; margin: 1px; background: #3399ff; color: #fff; }
.axis { display: flex; align-items: center; justify-content: space-between; margin-top: 46px; }
.axis label { display: flex; align-items: center; gap: 3px; white-space: nowrap; }
.axis input { width: 13px; height: 13px; appearance: none; border: 1px solid #8e8f8f; background: linear-gradient(#dfe4ea, #fff); position: relative; }
.axis input::after { content: ""; position: absolute; left: 3px; top: 0; width: 5px; height: 9px; border: solid #3a4f9c; border-width: 0 2px 2px 0; transform: rotate(38deg); }
.pick.flat { width: 144px; border: 1px solid #707070; border-radius: 2px; background: linear-gradient(#f3f3f3, #ebebeb 50%, #dcdcdc 50%, #cfcfcf); }
.actions { display: flex; justify-content: flex-end; gap: 21px; margin-top: 17px; }
.actions button { height: 28px; border: 1px solid #707070; border-radius: 3px; background: linear-gradient(#f3f3f3, #ebebeb 50%, #dcdcdc 50%, #cfcfcf); box-shadow: inset 0 0 0 1px #fbfbfb; }
.ok { width: 72px; }
.cancel { width: 78px; }

.marks { position: absolute; left: 0; top: 0; width: 1268px; height: 856px; pointer-events: none; }
```
